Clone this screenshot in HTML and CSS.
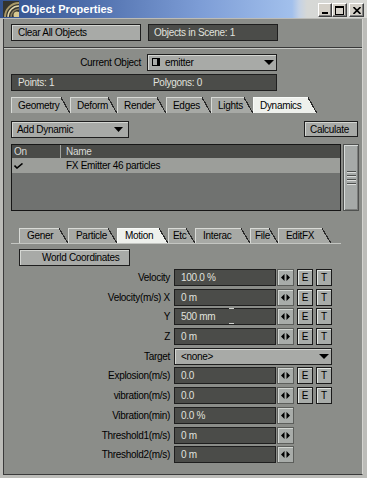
FILE: index.html
```html
<!DOCTYPE html>
<html>
<head>
<meta charset="utf-8">
<title>Object Properties</title>
<link rel="stylesheet" href="styles.css">
</head>
<body>
<div class="window">
  <div class="titlebar">
    <svg class="app-icon" viewBox="0 0 16 16" width="16" height="16">
      <rect width="16" height="16" fill="#34342e"/>
      <path d="M2 16 A14 14 0 0 1 16 2" stroke="#a89868" stroke-width="2" fill="none"/>
      <path d="M5 16 A11 11 0 0 1 16 5" stroke="#e4d8ac" stroke-width="1.5" fill="none"/>
      <path d="M8 16 A8 8 0 0 1 16 8" stroke="#8c8060" stroke-width="1.5" fill="none"/>
      <circle cx="14" cy="14" r="3.5" fill="#d8c890"/>
    </svg>
    <span class="title">Object Properties</span>
    <div class="caption-buttons">
      <div class="cbtn cbtn-min"><span class="glyph-min"></span></div>
      <div class="cbtn cbtn-max"><span class="glyph-max"></span></div>
      <div class="cbtn cbtn-close">
        <svg viewBox="0 0 8 7" width="8" height="7"><path d="M0.5 0 L7.5 7 M7.5 0 L0.5 7" stroke="#000" stroke-width="1.6"/></svg>
      </div>
    </div>
  </div>

  <div class="client">
    <div class="top-row">
      <div class="btn btn-clear">Clear All Objects</div>
      <div class="field field-scene">Objects in Scene: 1</div>
    </div>
    <div class="separator"></div>

    <div class="main">
      <div class="obj-row">
        <span class="obj-label">Current Object</span>
        <div class="select select-obj">
          <svg class="obj-icon" viewBox="0 0 9 9" width="9" height="9">
            <rect x="0.5" y="0.5" width="7" height="7" fill="none" stroke="#000"/>
            <rect x="5" y="1" width="2" height="6" fill="#000"/>
          </svg>
          <span class="obj-name">emitter</span>
          <svg class="tri" viewBox="0 0 10 5" width="10" height="5"><polygon points="0,0 10,0 5,5" fill="#000"/></svg>
        </div>
      </div>

      <div class="field stats">
        <span class="stat-points">Points: 1</span>
        <span>Polygons: 0</span>
      </div>

      <div class="tabs tabs-main">
        <div class="tab" style="width:59px">Geometry</div>
        <div class="tab" style="width:47px">Deform</div>
        <div class="tab" style="width:49px">Render</div>
        <div class="tab" style="width:45px">Edges</div>
        <div class="tab" style="width:42px">Lights</div>
        <div class="tab active" style="width:64px">Dynamics</div>
      </div>

      <div class="dyn-row">
        <div class="select select-dyn">
          <span>Add Dynamic</span>
          <svg class="tri" viewBox="0 0 9 5" width="9" height="5"><polygon points="0,0 9,0 4.5,5" fill="#000"/></svg>
        </div>
        <div class="btn btn-calc">Calculate</div>
      </div>

      <div class="list-row">
        <div class="list">
          <div class="list-head">
            <span class="col-on">On</span>
            <span class="col-name">Name</span>
          </div>
          <div class="list-item">
            <span class="col-on col-check">
              <svg viewBox="0 0 9 6" width="9" height="6"><path d="M0.5 2.5 L3 5 L8.5 0.5" stroke="#000" stroke-width="1.6" fill="none"/></svg>
            </span>
            <span class="col-name">FX Emitter 46 particles</span>
          </div>
        </div>
        <div class="scrollbar"><span class="grip"></span></div>
      </div>

      <div class="tabs tabs-sub">
        <div class="tab" style="width:49px">Gener</div>
        <div class="tab" style="width:49px">Particle</div>
        <div class="tab active" style="width:51px">Motion</div>
        <div class="tab tab-narrow" style="width:27px">Etc</div>
        <div class="tab" style="width:55px">Interac</div>
        <div class="tab tab-narrow" style="width:28px">File</div>
        <div class="tab" style="width:53px">EditFX</div>
      </div>

      <div class="btn btn-world">World Coordinates</div>

      <div class="params">
        <div class="param">
          <span class="param-label">Velocity</span>
          <div class="field field-val">100.0 %</div>
          <div class="spin"><svg viewBox="0 0 9 7" width="9" height="7"><polygon points="0,3.5 3.5,0 3.5,7" fill="#000"/><polygon points="5.5,0 9,3.5 5.5,7" fill="#000"/></svg></div>
          <div class="et">E</div><div class="et">T</div>
        </div>
        <div class="param">
          <span class="param-label">Velocity(m/s) X</span>
          <div class="field field-val">0 m</div>
          <div class="spin"><svg viewBox="0 0 9 7" width="9" height="7"><polygon points="0,3.5 3.5,0 3.5,7" fill="#000"/><polygon points="5.5,0 9,3.5 5.5,7" fill="#000"/></svg></div>
          <div class="et">E</div><div class="et">T</div>
        </div>
        <div class="param">
          <span class="param-label">Y</span>
          <div class="field field-val">500 mm<span class="ibeam"></span></div>
          <div class="spin"><svg viewBox="0 0 9 7" width="9" height="7"><polygon points="0,3.5 3.5,0 3.5,7" fill="#000"/><polygon points="5.5,0 9,3.5 5.5,7" fill="#000"/></svg></div>
          <div class="et">E</div><div class="et">T</div>
        </div>
        <div class="param">
          <span class="param-label">Z</span>
          <div class="field field-val">0 m</div>
          <div class="spin"><svg viewBox="0 0 9 7" width="9" height="7"><polygon points="0,3.5 3.5,0 3.5,7" fill="#000"/><polygon points="5.5,0 9,3.5 5.5,7" fill="#000"/></svg></div>
          <div class="et">E</div><div class="et">T</div>
        </div>
        <div class="param">
          <span class="param-label">Target</span>
          <div class="select select-target">
            <span>&lt;none&gt;</span>
            <svg class="tri" viewBox="0 0 10 5" width="10" height="5"><polygon points="0,0 10,0 5,5" fill="#000"/></svg>
          </div>
        </div>
        <div class="param">
          <span class="param-label">Explosion(m/s)</span>
          <div class="field field-val">0.0</div>
          <div class="spin"><svg viewBox="0 0 9 7" width="9" height="7"><polygon points="0,3.5 3.5,0 3.5,7" fill="#000"/><polygon points="5.5,0 9,3.5 5.5,7" fill="#000"/></svg></div>
          <div class="et">E</div><div class="et">T</div>
        </div>
        <div class="param">
          <span class="param-label">vibration(m/s)</span>
          <div class="field field-val">0.0</div>
          <div class="spin"><svg viewBox="0 0 9 7" width="9" height="7"><polygon points="0,3.5 3.5,0 3.5,7" fill="#000"/><polygon points="5.5,0 9,3.5 5.5,7" fill="#000"/></svg></div>
          <div class="et">E</div><div class="et">T</div>
        </div>
        <div class="param">
          <span class="param-label">Vibration(min)</span>
          <div class="field field-val">0.0 %</div>
          <div class="spin"><svg viewBox="0 0 9 7" width="9" height="7"><polygon points="0,3.5 3.5,0 3.5,7" fill="#000"/><polygon points="5.5,0 9,3.5 5.5,7" fill="#000"/></svg></div>
        </div>
        <div class="param">
          <span class="param-label">Threshold1(m/s)</span>
          <div class="field field-val">0 m</div>
          <div class="spin"><svg viewBox="0 0 9 7" width="9" height="7"><polygon points="0,3.5 3.5,0 3.5,7" fill="#000"/><polygon points="5.5,0 9,3.5 5.5,7" fill="#000"/></svg></div>
        </div>
        <div class="param">
          <span class="param-label">Threshold2(m/s)</span>
          <div class="field field-val">0 m</div>
          <div class="spin"><svg viewBox="0 0 9 7" width="9" height="7"><polygon points="0,3.5 3.5,0 3.5,7" fill="#000"/><polygon points="5.5,0 9,3.5 5.5,7" fill="#000"/></svg></div>
        </div>
      </div>
    </div>
  </div>
</div>
</body>
</html>
```

FILE: styles.css
```css
* { box-sizing: border-box; }

html, body {
  margin: 0;
  padding: 0;
}

body {
  width: 367px;
  height: 478px;
  overflow: hidden;
  font-family: "Liberation Sans", Arial, sans-serif;
  font-size: 10px;
  letter-spacing: -0.3px;
  color: #000;
  background: #bcbcb8;
}

.window {
  width: 367px;
  height: 478px;
  display: flex;
  flex-direction: column;
  background: #bcbcb8;
}

/* ---------- title bar ---------- */
.titlebar {
  height: 18px;
  flex: none;
  display: flex;
  align-items: center;
  background: linear-gradient(to right,
    #34538f 0px, #4f6fac 90px, #7d9dd6 200px, #a2c0ec 292px,
    #c4d2e6 299px, #d6d8d6 307px, #d8d8d4 367px);
}

.app-icon {
  flex: none;
  margin-left: 3px;
}

.title {
  margin-left: 2px;
  color: #fff;
  font-weight: bold;
  font-size: 11px;
  letter-spacing: 0;
  white-space: nowrap;
}

.caption-buttons {
  margin-left: auto;
  margin-right: 3px;
  align-self: flex-start;
  margin-top: 3px;
  display: flex;
}

.cbtn {
  width: 15px;
  height: 14px;
  background: #d4d0c8;
  border: 1px solid;
  border-color: #ffffff #404040 #404040 #ffffff;
  box-shadow: inset -1px -1px #808080;
  display: flex;
  align-items: center;
  justify-content: center;
}

.cbtn-min {
  width: 14px;
  align-items: flex-end;
  padding-bottom: 2px;
}

.glyph-min {
  width: 6px;
  height: 2px;
  background: #000;
}

.glyph-max {
  width: 9px;
  height: 9px;
  border: 1px solid #000;
  border-top-width: 2px;
}

.cbtn-close {
  margin-left: 2px;
}

/* ---------- client area ---------- */
.client {
  flex: 1;
  margin: 1px 4px 3px 3px;
  background: #8b8d89;
  border-left: 1px solid #3a3a3a;
  border-right: 1px solid #d4d4d0;
  border-bottom: 1px solid #3a3a3a;
  display: flex;
  flex-direction: column;
}

.top-row {
  display: flex;
  gap: 7px;
  padding: 5px 0 0 7px;
}

.btn {
  height: 17px;
  background: #a8aaa7;
  border: 1px solid #1e1e1e;
  box-shadow: inset 1px 1px #d4d6d2;
  display: flex;
  align-items: center;
  white-space: nowrap;
  flex: none;
}

.field {
  height: 17px;
  background: #4b4c49;
  border: 1px solid #1e1e1e;
  color: #e0e2de;
  display: flex;
  align-items: center;
  white-space: nowrap;
  flex: none;
}

.btn-clear {
  width: 130px;
  padding-left: 6px;
}

.field-scene {
  width: 130px;
  padding-left: 5px;
}

.separator {
  margin-top: 6px;
  border-top: 1px solid #383838;
  border-bottom: 1px solid #c6c8c4;
}

.main {
  padding: 5px 3px 0 7px;
  display: flex;
  flex-direction: column;
  align-items: flex-start;
}

.obj-row {
  display: flex;
  align-items: center;
  height: 17px;
}

.obj-label {
  width: 130px;
  margin-right: 6px;
  text-align: right;
  white-space: nowrap;
}

.select {
  height: 17px;
  background: #a8aaa7;
  border: 1px solid #1e1e1e;
  box-shadow: inset 1px 1px #d4d6d2;
  display: flex;
  align-items: center;
  white-space: nowrap;
  flex: none;
}

.select .tri {
  margin-left: auto;
  flex: none;
}

.select-obj {
  width: 130px;
  padding: 0 2px 0 4px;
}

.obj-icon {
  flex: none;
}

.obj-name {
  margin-left: 4px;
}

.stats {
  margin-top: 3px;
  width: 266px;
  padding-left: 6px;
}

.stat-points {
  width: 135px;
}

/* ---------- tabs ---------- */
.tabs {
  display: flex;
  flex: none;
}

.tab {
  --tab: #a7a9a5;
  --edge: #d8dad6;
  height: 100%;
  flex: none;
  display: flex;
  align-items: center;
  padding-left: 7px;
  white-space: nowrap;
  background:
    linear-gradient(var(--edge), var(--edge)) left top / calc(100% - 9px) 1px no-repeat,
    linear-gradient(var(--edge), var(--edge)) left top / 1px 100% no-repeat,
    linear-gradient(to top right,
      var(--tab) calc(50% - 0.8px),
      #2a2a2a calc(50% - 0.8px),
      #2a2a2a calc(50% + 0.4px),
      transparent calc(50% + 0.4px)) right top / 9px 100% no-repeat,
    linear-gradient(var(--tab), var(--tab)) left top / calc(100% - 9px) 100% no-repeat;
}

.tab.active {
  --tab: #eef0ec;
  --edge: #f8faf8;
}

.tab-narrow {
  padding-left: 5px;
}

.tabs-main {
  margin-top: 6px;
  height: 16px;
}

.tabs-sub {
  margin-top: 17px;
  height: 16px;
  width: 330px;
  padding-left: 8px;
  border-bottom: 1px solid #c4c6c2;
}

.tabs-sub .tab {
  padding-left: 8px;
}

.tabs-sub .tab-narrow {
  padding-left: 5px;
}

/* ---------- dynamics row ---------- */
.dyn-row {
  margin-top: 8px;
  display: flex;
  align-items: flex-start;
  width: 100%;
}

.select-dyn {
  width: 118px;
  padding: 0 5px 0 5px;
}

.btn-calc {
  margin-left: auto;
  margin-right: 1px;
  width: 54px;
  height: 16px;
  padding-left: 5px;
}

/* ---------- list ---------- */
.list-row {
  margin-top: 6px;
  display: flex;
  gap: 2px;
  height: 67px;
}

.list {
  width: 330px;
  border: 1px solid #161616;
  background: #707270;
  display: flex;
  flex-direction: column;
}

.list-head {
  height: 13px;
  background: #4a4b48;
  color: #d8dad6;
  display: flex;
  align-items: center;
}

.list-head .col-on {
  border-right: 1px solid #a2a4a0;
  height: 100%;
  display: flex;
  align-items: center;
}

.col-on {
  width: 49px;
  padding-left: 2px;
  flex: none;
}

.col-name {
  padding-left: 5px;
  white-space: nowrap;
}

.list-item {
  height: 15px;
  background: #9c9e9a;
  display: flex;
  align-items: center;
}

.col-check {
  display: flex;
  align-items: center;
  padding-left: 2px;
}

.scrollbar {
  width: 16px;
  background: #a6aaa8;
  border: 1px solid #505250;
  box-shadow: inset 1px 1px #d8dcda, inset -1px -1px #7c7e7c;
  display: flex;
  align-items: center;
  justify-content: center;
}

.grip {
  width: 9px;
  height: 14px;
  background: repeating-linear-gradient(to bottom,
    #4e504e 0px, #4e504e 1px,
    #dcdedc 1px, #dcdedc 2px,
    transparent 2px, transparent 4px);
}

/* ---------- motion parameters ---------- */
.btn-world {
  margin-top: 5px;
  margin-left: 8px;
  width: 111px;
  padding-left: 22px;
}

.params {
  margin-top: 3px;
  display: flex;
  flex-direction: column;
  gap: 2.7px;
}

.param {
  display: flex;
  align-items: center;
  height: 17px;
}

.param-label {
  width: 159px;
  margin-right: 4px;
  text-align: right;
  white-space: nowrap;
  flex: none;
}

.field-val {
  width: 102px;
  padding-left: 6px;
  position: relative;
}

.ibeam {
  position: absolute;
  left: 54px;
  top: -1px;
  width: 5px;
  height: 16px;
  border-top: 1px solid #d0d2ce;
  border-bottom: 1px solid #d0d2ce;
}

.spin {
  width: 17px;
  height: 17px;
  margin-left: 1px;
  background: #a8aca9;
  border: 1px solid #5c5e5b;
  box-shadow: inset 1px 1px #d2d6d2;
  display: flex;
  align-items: center;
  justify-content: center;
  flex: none;
}

.et {
  width: 16px;
  height: 17px;
  margin-left: 3px;
  background: #a8aca9;
  border: 1px solid #1a1a1a;
  box-shadow: inset 1px 1px #e2e6e2;
  display: flex;
  align-items: center;
  justify-content: center;
  flex: none;
  letter-spacing: 0;
}

.select-target {
  width: 158px;
  padding: 0 2px 0 6px;
}
```
